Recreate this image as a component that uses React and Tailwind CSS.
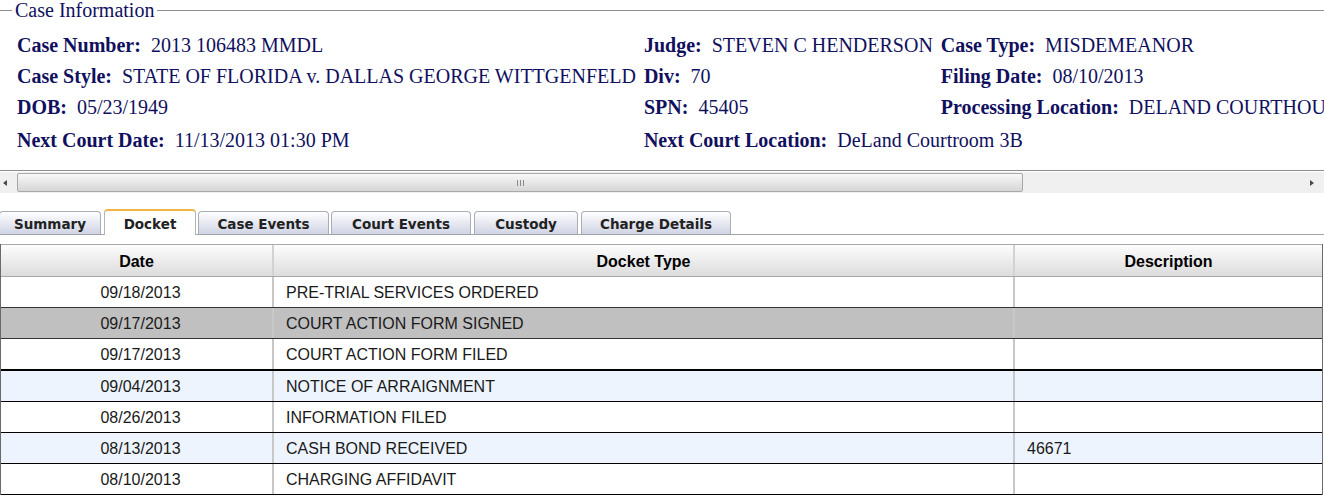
import React from 'react';

const caseInfo = [
  [['Case Number:', '2013 106483 MMDL'], ['Judge:', 'STEVEN C HENDERSON'], ['Case Type:', 'MISDEMEANOR']],
  [['Case Style:', 'STATE OF FLORIDA v. DALLAS GEORGE WITTGENFELD'], ['Div:', '70'], ['Filing Date:', '08/10/2013']],
  [['DOB:', '05/23/1949'], ['SPN:', '45405'], ['Processing Location:', 'DELAND COURTHOUSE']],
];

const tabs = [
  { label: 'Summary', cls: 'ml-[-1px] w-[102px]' },
  { label: 'Docket', cls: 'ml-[3px] w-[92px]', active: true },
  { label: 'Case Events', cls: 'ml-[2px] w-[131px]' },
  { label: 'Court Events', cls: 'ml-[2px] w-[140px]' },
  { label: 'Custody', cls: 'ml-[3px] w-[104px]' },
  { label: 'Charge Details', cls: 'ml-[3px] w-[150px]' },
];

const rows = [
  { date: '09/18/2013', type: 'PRE-TRIAL SERVICES ORDERED', desc: '', bg: 'bg-white', line: 'h-[31px] border-b border-[#333]' },
  { date: '09/17/2013', type: 'COURT ACTION FORM SIGNED', desc: '', bg: 'bg-[#c0c0c0]', line: 'h-[31px] border-b border-[#333]' },
  { date: '09/17/2013', type: 'COURT ACTION FORM FILED', desc: '', bg: 'bg-white', line: 'h-[32px] border-b-2 border-black' },
  { date: '09/04/2013', type: 'NOTICE OF ARRAIGNMENT', desc: '', bg: 'bg-[#edf4fd]', line: 'h-[31px] border-b border-black' },
  { date: '08/26/2013', type: 'INFORMATION FILED', desc: '', bg: 'bg-white', line: 'h-[31px] border-b border-black' },
  { date: '08/13/2013', type: 'CASH BOND RECEIVED', desc: '46671', bg: 'bg-[#edf4fd]', line: 'h-[31px] border-b border-black' },
  { date: '08/10/2013', type: 'CHARGING AFFIDAVIT', desc: '', bg: 'bg-white', line: 'h-[31px] border-b border-black' },
];

const Field = ({ label, value, className = '' }) => (
  <div className={`whitespace-nowrap ${className}`}>
    <b>{label}</b>
    {'\u00a0 '}
    {value}
  </div>
);

export default function App() {
  return (
    <div className="w-[1324px] h-[496px] overflow-hidden bg-white">
      {/* Case Information */}
      <div className="h-[171px] border-b border-[#8e8e8e] overflow-hidden text-[#10105e] font-['Liberation_Serif',serif] text-[20px]">
        <div className="flex items-center h-5 leading-5">
          <div className="w-3 border-t border-[#8e8e8e]" />
          <span className="px-[3px]">Case Information</span>
          <div className="flex-1 border-t border-[#8e8e8e]" />
        </div>
        <div className="mt-[9px] pl-[17px] w-max grid grid-cols-[auto_auto_auto] grid-rows-[32px_30px_32px_33px] gap-x-2 items-center leading-none">
          {caseInfo.map((row) =>
            row.map(([label, value]) => <Field key={label} label={label} value={value} />)
          )}
          <Field label="Next Court Date:" value="11/13/2013 01:30 PM" />
          <Field label="Next Court Location:" value="DeLand Courtroom 3B" className="col-span-2" />
        </div>
      </div>

      {/* Horizontal scrollbar */}
      <div className="mt-px h-[21px] bg-[#f0f0f0] flex items-center">
        <div className="w-[17px] flex justify-start pl-[3px]">
          <div className="border-y-[3.5px] border-y-transparent border-r-[4px] border-r-[#4a4a4a]" />
        </div>
        <div className="w-[1006px] h-[19px] border border-[#a9a9a9] rounded-[2px] bg-linear-to-b from-[#f8f8f8] to-[#d6d6d6] flex items-center justify-center gap-[2px]">
          <div className="w-px h-[6px] bg-[#8a8a8a]" />
          <div className="w-px h-[6px] bg-[#8a8a8a]" />
          <div className="w-px h-[6px] bg-[#8a8a8a]" />
        </div>
        <div className="flex-1" />
        <div className="w-[17px] flex justify-start pl-[3px]">
          <div className="border-y-[3.5px] border-y-transparent border-l-[4px] border-l-[#4a4a4a]" />
        </div>
      </div>

      {/* Tabs */}
      <div className="mt-[16px] h-[26px] flex items-end border-b border-[#a3a3a3] font-['DejaVu_Sans',sans-serif] text-[13.5px] font-bold text-[#222]">
        {tabs.map((t) =>
          t.active ? (
            <div
              key={t.label}
              className={`${t.cls} h-[26px] -mb-px bg-white border-x border-[#b5b5b5] border-t-2 border-t-[#f2b445] rounded-t-[4px] flex items-center justify-center pt-[3px]`}
            >
              {t.label}
            </div>
          ) : (
            <div
              key={t.label}
              className={`${t.cls} h-[23px] bg-linear-to-b from-white to-[#d0d4e4] border border-b-0 border-[#a9adb8] rounded-t-[4px] flex items-center justify-center pt-[3px]`}
            >
              {t.label}
            </div>
          )
        )}
      </div>

      {/* Docket grid */}
      <div className="mt-[9px] w-[1323px] border-x border-[#6a6a6a] font-['Liberation_Sans',Arial,sans-serif] text-[16px] text-[#1a1a1a]">
        <div className="h-[33px] grid grid-cols-[271px_2px_739px_2px_307px] border-y border-[#a8a8a8] bg-linear-to-b from-[#fdfdfd] to-[#dcdcdc] font-bold text-black">
          <div className="flex items-center justify-center pt-[2px]">Date</div>
          <div className="bg-[#d2d2d2]" />
          <div className="flex items-center justify-center pt-[2px]">Docket Type</div>
          <div className="bg-[#d2d2d2]" />
          <div className="flex items-center justify-center pt-[2px]">Description</div>
        </div>
        {rows.map((r, i) => (
          <div key={i} className={`grid grid-cols-[271px_2px_739px_2px_307px] ${r.bg} ${r.line}`}>
            <div className="flex items-center justify-center pl-2 pt-[2px]">{r.date}</div>
            <div className="bg-[#c8c8c8]" />
            <div className="flex items-center pl-3 pt-[2px]">{r.type}</div>
            <div className="bg-[#c8c8c8]" />
            <div className="flex items-center pl-3 pt-[2px]">{r.desc}</div>
          </div>
        ))}
      </div>
    </div>
  );
}
